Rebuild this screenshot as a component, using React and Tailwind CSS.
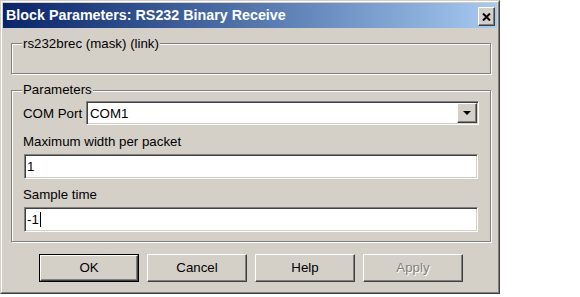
export default function App() {
  const sunken =
    "border border-t-[#808080] border-l-[#808080] border-r-white border-b-white shadow-[inset_1px_1px_0_#404040,inset_-1px_-1px_0_#d4d0c8] bg-white";
  const raised =
    "border border-t-white border-l-white border-r-[#404040] border-b-[#404040] shadow-[inset_-1px_-1px_0_#808080,inset_1px_1px_0_#d4d0c8] bg-[#d4d0c8]";
  const etched =
    "border border-[#808080] shadow-[inset_1px_1px_0_white,1px_1px_0_white]";

  return (
    <div className="w-[580px] h-[297px] bg-white font-['Liberation_Sans',Arial,sans-serif] text-[13.3px] text-black">
      <div className="w-[500px] h-[294px] border border-t-[#d4d0c8] border-l-[#d4d0c8] border-r-[#404040] border-b-[#404040] bg-[#d4d0c8]">
        <div className="h-full border border-t-white border-l-white border-r-[#808080] border-b-[#808080] p-px flex flex-col">
          {/* Title bar */}
          <div className="h-[25px] shrink-0 flex items-center bg-linear-to-r from-[#0a246a] to-[#a6caf0] pl-[3px] pr-[2px]">
            <span className="flex-1 text-white font-bold text-[14.3px] leading-none">
              Block Parameters: RS232 Binary Receive
            </span>
            <div className={`w-[17px] h-[19px] mt-[2px] flex items-center justify-center ${raised}`}>
              <svg width="9" height="8" viewBox="0 0 9 8">
                <path d="M1 0.5 L8 7.5 M8 0.5 L1 7.5" stroke="black" strokeWidth="2" />
              </svg>
            </div>
          </div>

          {/* Group 1 */}
          <div className={`relative ml-[8px] mt-[15px] w-[480px] h-[31px] shrink-0 ${etched}`}>
            <span className="absolute left-[10px] top-[-8px] px-px bg-[#d4d0c8] leading-[15px]">
              rs232brec (mask) (link)
            </span>
          </div>

          {/* Group 2 */}
          <div className={`relative ml-[8px] mt-[16px] w-[480px] h-[152px] shrink-0 flex flex-col pt-[10px] ${etched}`}>
            <span className="absolute left-[10px] top-[-9px] px-px bg-[#d4d0c8] leading-[15px]">
              Parameters
            </span>

            <div className="flex items-center h-[24px] pl-[11px]">
              <span className="w-[63px] leading-[15px]">COM Port</span>
              <div className={`w-[393px] h-[24px] flex items-stretch ${sunken} p-[1px]`}>
                <span className="flex-1 pl-[2px] flex items-center leading-[15px]">COM1</span>
                <div className={`w-[20px] flex items-center justify-center ${raised}`}>
                  <svg width="8" height="4" viewBox="0 0 8 4">
                    <path d="M0 0 H8 L4 4 Z" fill="black" />
                  </svg>
                </div>
              </div>
            </div>

            <div className="mt-[9px] pl-[11px] h-[15px] leading-[15px]">Maximum width per packet</div>
            <div className={`ml-[12px] mt-[5px] w-[454px] h-[25px] ${sunken} flex items-center pl-[2px] leading-[15px]`}>
              1
            </div>

            <div className="mt-[8px] pl-[11px] h-[15px] leading-[15px]">Sample time</div>
            <div className={`ml-[12px] mt-[5px] w-[454px] h-[25px] ${sunken} flex items-center pl-[2px] leading-[15px]`}>
              <span>-1</span>
              <span className="inline-block w-px h-[15px] bg-black ml-px" />
            </div>
          </div>

          {/* Buttons */}
          <div className="flex gap-[8px] pl-[36px] mt-[12px]">
            <div className="border border-black">
              <div className={`w-[98px] h-[26px] flex items-center justify-center ${raised}`}>OK</div>
            </div>
            <div className={`w-[100px] h-[28px] flex items-center justify-center ${raised}`}>Cancel</div>
            <div className={`w-[100px] h-[28px] flex items-center justify-center ${raised}`}>Help</div>
            <div className={`w-[100px] h-[28px] flex items-center justify-center text-[#808080] [text-shadow:1px_1px_0_white] ${raised}`}>
              Apply
            </div>
          </div>
        </div>
      </div>
    </div>
  );
}
